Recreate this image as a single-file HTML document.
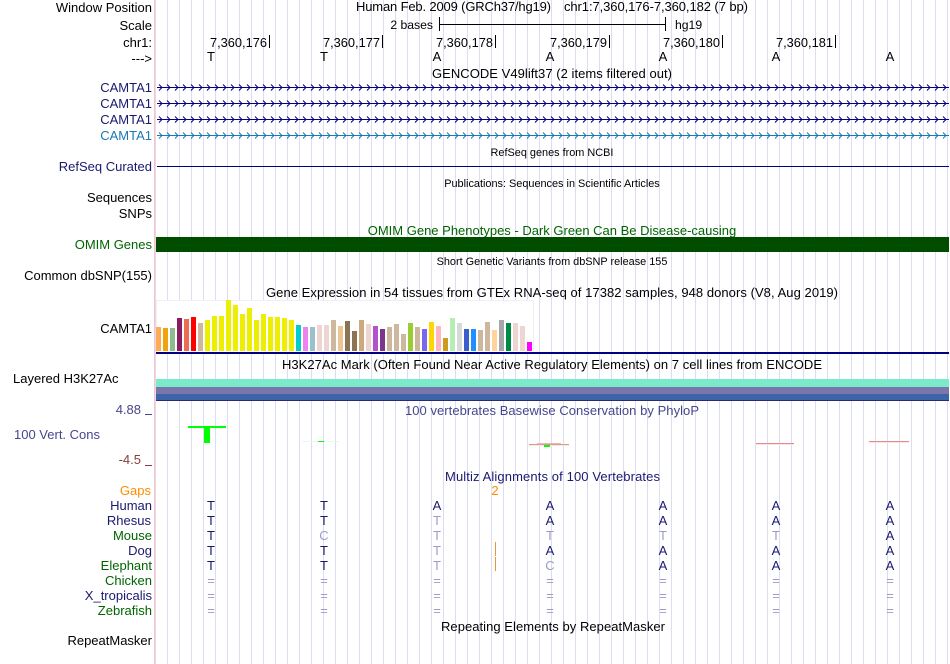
<!DOCTYPE html>
<html><head><meta charset="utf-8"><style>
html,body{margin:0;padding:0;background:#fff;width:950px;height:664px;overflow:hidden}
svg{display:block;font-family:"Liberation Sans",sans-serif;font-size:13px;fill:#000}
.e{text-anchor:end}.m{text-anchor:middle}
.n{fill:#191970}.g{fill:#006400}.s{font-size:10.9px}.r{font-size:12.8px}
.b{text-anchor:middle;font-size:13px;fill:#191970}.f{text-anchor:middle;font-size:13px;fill:#9c9cc8}
</style></head><body>
<svg width="950" height="664" viewBox="0 0 950 664" xmlns="http://www.w3.org/2000/svg">
<defs>
<pattern id="grid" x="167" y="0" width="12" height="664" patternUnits="userSpaceOnUse"><rect width="1" height="664" fill="#dcdcf4"/></pattern>
<pattern id="chev" x="157" y="80" width="8" height="16" patternUnits="userSpaceOnUse"><path d="M2 4.500L5 7.500L2 10.500" fill="none" stroke="#000080" stroke-width="1"/></pattern>
<pattern id="chev2" x="157" y="128" width="8" height="16" patternUnits="userSpaceOnUse"><path d="M2 4.500L5 7.500L2 10.500" fill="none" stroke="#1a78b4" stroke-width="1"/></pattern>
</defs>
<rect x="155" width="795" height="664" fill="url(#grid)"/>
<rect x="154" width="1" height="664" fill="#ffc0c0"/>

<!-- header labels -->
<text x="152" y="12" class="e">Window Position</text>
<text x="152" y="30" class="e">Scale</text>
<text x="152" y="47" class="e">chr1:</text>
<text x="152" y="63" class="e">---&gt;</text>
<text x="356" y="11" textLength="195">Human Feb. 2009 (GRCh37/hg19)</text>
<text x="564" y="11" textLength="184">chr1:7,360,176-7,360,182 (7 bp)</text>
<text x="433" y="29" class="e" style="font-size:12.2px">2 bases</text>
<path d="M439.500 17V31M665.500 17V31M439 24.500H666" stroke="#000" fill="none"/>
<text x="675" y="29" style="font-size:12.2px">hg19</text>

<text x="210" y="47" class="r">7,360,176</text><rect x="269" y="35" width="1" height="13"/>
<text x="323" y="47" class="r">7,360,177</text><rect x="382" y="35" width="1" height="13"/>
<text x="436" y="47" class="r">7,360,178</text><rect x="495" y="35" width="1" height="13"/>
<text x="550" y="47" class="r">7,360,179</text><rect x="609" y="35" width="1" height="13"/>
<text x="663" y="47" class="r">7,360,180</text><rect x="722" y="35" width="1" height="13"/>
<text x="776" y="47" class="r">7,360,181</text><rect x="835" y="35" width="1" height="13"/>

<g text-anchor="middle">
<text x="211" y="61">T</text><text x="324" y="61">T</text><text x="437" y="61">A</text><text x="550" y="61">A</text><text x="663" y="61">A</text><text x="776" y="61">A</text><text x="890" y="61">A</text>
</g>
<text x="432" y="78" textLength="240">GENCODE V49lift37 (2 items filtered out)</text>

<!-- genes -->
<text x="152" y="92" class="e n">CAMTA1</text>
<text x="152" y="108" class="e n">CAMTA1</text>
<text x="152" y="124" class="e n">CAMTA1</text>
<text x="152" y="140" class="e" style="fill:#1a78b4">CAMTA1</text>
<rect x="157" y="87" width="792" height="1" fill="#000080"/><rect x="157" y="80" width="792" height="16" fill="url(#chev)"/>
<rect x="157" y="103" width="792" height="1" fill="#000080"/><rect x="157" y="96" width="792" height="16" fill="url(#chev)"/>
<rect x="157" y="119" width="792" height="1" fill="#000080"/><rect x="157" y="112" width="792" height="16" fill="url(#chev)"/>
<rect x="157" y="135" width="792" height="1" fill="#1a78b4"/><rect x="157" y="128" width="792" height="16" fill="url(#chev2)"/>

<text x="552" y="156" class="m s">RefSeq genes from NCBI</text>
<text x="152" y="171" class="e n">RefSeq Curated</text>
<rect x="157" y="166" width="792" height="1" fill="#000080"/>
<text x="552" y="187" class="m s">Publications: Sequences in Scientific Articles</text>
<text x="152" y="202" class="e">Sequences</text>
<text x="152" y="218" class="e">SNPs</text>
<text x="552" y="235" class="m g">OMIM Gene Phenotypes - Dark Green Can Be Disease-causing</text>
<text x="152" y="249" class="e g">OMIM Genes</text>
<rect x="156" y="237" width="793" height="15" fill="#004d00"/>
<text x="552" y="265" class="m s">Short Genetic Variants from dbSNP release 155</text>
<text x="152" y="280" class="e">Common dbSNP(155)</text>
<text x="266" y="297" textLength="572">Gene Expression in 54 tissues from GTEx RNA-seq of 17382 samples, 948 donors (V8, Aug 2019)</text>
<text x="152" y="333" class="e">CAMTA1</text>

<!-- GTEx -->
<rect x="156.500" y="300.500" width="377" height="52" fill="#fff" stroke="#f0f0f4"/>
<g>
<rect x="156" y="327" width="5" height="24" fill="#ffaa55"/>
<rect x="163" y="328" width="5" height="23" fill="#f0a30a"/>
<rect x="170" y="328" width="5" height="23" fill="#8fbc8f"/>
<rect x="177" y="318" width="5" height="33" fill="#8b1c62"/>
<rect x="184" y="319" width="5" height="32" fill="#ee6a50"/>
<rect x="191" y="317" width="5" height="34" fill="#ff0000"/>
<rect x="198" y="323" width="5" height="28" fill="#cdb79e"/>
<rect x="205" y="320" width="5" height="31" fill="#eeee00"/>
<rect x="212" y="316" width="5" height="35" fill="#eeee00"/>
<rect x="219" y="316" width="5" height="35" fill="#eeee00"/>
<rect x="226" y="300" width="5" height="51" fill="#eeee00"/>
<rect x="233" y="305" width="5" height="46" fill="#eeee00"/>
<rect x="240" y="314" width="5" height="37" fill="#eeee00"/>
<rect x="247" y="308" width="5" height="43" fill="#eeee00"/>
<rect x="254" y="320" width="5" height="31" fill="#eeee00"/>
<rect x="261" y="314" width="5" height="37" fill="#eeee00"/>
<rect x="268" y="317" width="5" height="34" fill="#eeee00"/>
<rect x="275" y="317" width="5" height="34" fill="#eeee00"/>
<rect x="282" y="318" width="5" height="33" fill="#eeee00"/>
<rect x="289" y="320" width="5" height="31" fill="#eeee00"/>
<rect x="296" y="325" width="5" height="26" fill="#00cdcd"/>
<rect x="303" y="327" width="5" height="24" fill="#ee82ee"/>
<rect x="310" y="327" width="5" height="24" fill="#9ac0cd"/>
<rect x="317" y="325" width="5" height="26" fill="#eed5d2"/>
<rect x="324" y="325" width="5" height="26" fill="#eed5d2"/>
<rect x="331" y="320" width="5" height="31" fill="#cdb79e"/>
<rect x="338" y="326" width="5" height="25" fill="#eec591"/>
<rect x="345" y="321" width="5" height="30" fill="#8b7355"/>
<rect x="352" y="331" width="5" height="20" fill="#8b7355"/>
<rect x="359" y="320" width="5" height="31" fill="#cdaa7d"/>
<rect x="366" y="324" width="5" height="27" fill="#eed5d2"/>
<rect x="373" y="326" width="5" height="25" fill="#b452cd"/>
<rect x="380" y="329" width="5" height="22" fill="#7a378b"/>
<rect x="387" y="327" width="5" height="24" fill="#cdb79e"/>
<rect x="394" y="324" width="5" height="27" fill="#cdb79e"/>
<rect x="401" y="334" width="5" height="17" fill="#cdb79e"/>
<rect x="408" y="323" width="5" height="28" fill="#9acd32"/>
<rect x="415" y="327" width="5" height="24" fill="#cdb79e"/>
<rect x="422" y="329" width="5" height="22" fill="#7a67ee"/>
<rect x="429" y="322" width="5" height="29" fill="#ffd700"/>
<rect x="436" y="326" width="5" height="25" fill="#ffb6c1"/>
<rect x="443" y="338" width="5" height="13" fill="#cd9b1d"/>
<rect x="450" y="318" width="5" height="33" fill="#b4eeb4"/>
<rect x="457" y="323" width="5" height="28" fill="#d9d9d9"/>
<rect x="464" y="329" width="5" height="22" fill="#3a5fcd"/>
<rect x="471" y="329" width="5" height="22" fill="#1e90ff"/>
<rect x="478" y="330" width="5" height="21" fill="#cdb79e"/>
<rect x="485" y="322" width="5" height="29" fill="#cdb79e"/>
<rect x="492" y="330" width="5" height="21" fill="#ffd39b"/>
<rect x="499" y="320" width="5" height="31" fill="#a6a6a6"/>
<rect x="506" y="323" width="5" height="28" fill="#008b45"/>
<rect x="513" y="323" width="5" height="28" fill="#eed5d2"/>
<rect x="520" y="326" width="5" height="25" fill="#eed5d2"/>
<rect x="527" y="342" width="5" height="9" fill="#ff00ff"/>
</g>
<rect x="156" y="352" width="793" height="2" fill="#000080"/>

<text x="282" y="369" textLength="540">H3K27Ac Mark (Often Found Near Active Regulatory Elements) on 7 cell lines from ENCODE</text>
<text x="13" y="383">Layered H3K27Ac</text>
<rect x="156" y="379" width="793" height="8" fill="#7aeacb"/>
<rect x="156" y="387" width="793" height="7" fill="#7b75ab"/>
<rect x="156" y="394" width="793" height="6" fill="#3d63a8"/>
<rect x="156" y="400" width="793" height="1" fill="#2a2a70"/>

<!-- conservation -->
<text x="141" y="414" class="e" style="fill:#46468c">4.88</text>
<rect x="145" y="414" width="7" height="1" fill="#46468c"/>
<text x="14" y="439" style="fill:#46468c">100 Vert. Cons</text>
<text x="141" y="464" class="e" style="fill:#8c3c3c">-4.5</text>
<rect x="145" y="465" width="7" height="1" fill="#8c3c3c"/>
<text x="405" y="415" textLength="294" style="fill:#46468c">100 vertebrates Basewise Conservation by PhyloP</text>
<rect x="188" y="426" width="38" height="2" fill="#00ff00"/>
<rect x="204" y="428" width="6" height="15" fill="#00ff00"/>
<rect x="302" y="441" width="37" height="1" fill="#e6fae6"/>
<rect x="318" y="441" width="6" height="1" fill="#00ff00"/>
<rect x="529" y="444" width="40" height="1" fill="#f09090"/>
<rect x="537" y="443" width="24" height="1" fill="#f8b0b0"/>
<rect x="529" y="445" width="40" height="1" fill="#d8f8d8"/>
<rect x="544" y="445" width="6" height="2" fill="#00ff00"/>
<rect x="756" y="443" width="38" height="1" fill="#e88888"/>
<rect x="756" y="444" width="38" height="1" fill="#fae4e4"/>
<rect x="869" y="441" width="40" height="1" fill="#e88888"/>
<rect x="869" y="442" width="40" height="1" fill="#fae4e4"/>

<text x="445" y="481" textLength="215" class="n">Multiz Alignments of 100 Vertebrates</text>

<text x="151" y="495" class="e" style="fill:#ff8c00">Gaps</text>
<text x="495" y="495" class="m" style="fill:#ff8c00">2</text>
<text x="152" y="510" class="e n">Human</text>
<text x="151" y="525" class="e n">Rhesus</text>
<text x="152" y="540" class="e g">Mouse</text>
<text x="152" y="555" class="e n">Dog</text>
<text x="152" y="570" class="e g">Elephant</text>
<text x="152" y="585" class="e g">Chicken</text>
<text x="152" y="600" class="e n">X_tropicalis</text>
<text x="152" y="615" class="e g">Zebrafish</text>

<text x="211" y="510" class="b">T</text><text x="211" y="525" class="b">T</text><text x="211" y="540" class="b">T</text><text x="211" y="555" class="b">T</text><text x="211" y="570" class="b">T</text>
<text x="211" y="585" class="f">=</text><text x="211" y="600" class="f">=</text><text x="211" y="615" class="f">=</text>

<text x="324" y="510" class="b">T</text><text x="324" y="525" class="b">T</text><text x="324" y="540" class="f">C</text><text x="324" y="555" class="b">T</text><text x="324" y="570" class="b">T</text>
<text x="324" y="585" class="f">=</text><text x="324" y="600" class="f">=</text><text x="324" y="615" class="f">=</text>

<text x="437" y="510" class="b">A</text><text x="437" y="525" class="f">T</text><text x="437" y="540" class="f">T</text><text x="437" y="555" class="f">T</text><text x="437" y="570" class="f">T</text>
<text x="437" y="585" class="f">=</text><text x="437" y="600" class="f">=</text><text x="437" y="615" class="f">=</text>

<rect x="495" y="542" width="1" height="14" fill="#e8963c"/><rect x="495" y="557" width="1" height="14" fill="#e8963c"/>

<text x="550" y="510" class="b">A</text><text x="550" y="525" class="b">A</text><text x="550" y="540" class="f">T</text><text x="550" y="555" class="b">A</text><text x="550" y="570" class="f">C</text>
<text x="550" y="585" class="f">=</text><text x="550" y="600" class="f">=</text><text x="550" y="615" class="f">=</text>

<text x="663" y="510" class="b">A</text><text x="663" y="525" class="b">A</text><text x="663" y="540" class="f">T</text><text x="663" y="555" class="b">A</text><text x="663" y="570" class="b">A</text>
<text x="663" y="585" class="f">=</text><text x="663" y="600" class="f">=</text><text x="663" y="615" class="f">=</text>

<text x="776" y="510" class="b">A</text><text x="776" y="525" class="b">A</text><text x="776" y="540" class="f">T</text><text x="776" y="555" class="b">A</text><text x="776" y="570" class="b">A</text>
<text x="776" y="585" class="f">=</text><text x="776" y="600" class="f">=</text><text x="776" y="615" class="f">=</text>

<text x="890" y="510" class="b">A</text><text x="890" y="525" class="b">A</text><text x="890" y="540" class="b">A</text><text x="890" y="555" class="b">A</text><text x="890" y="570" class="b">A</text>
<text x="890" y="585" class="f">=</text><text x="890" y="600" class="f">=</text><text x="890" y="615" class="f">=</text>

<text x="441" y="631" textLength="224">Repeating Elements by RepeatMasker</text>
<text x="152" y="645" class="e">RepeatMasker</text>
</svg>
</body></html>
